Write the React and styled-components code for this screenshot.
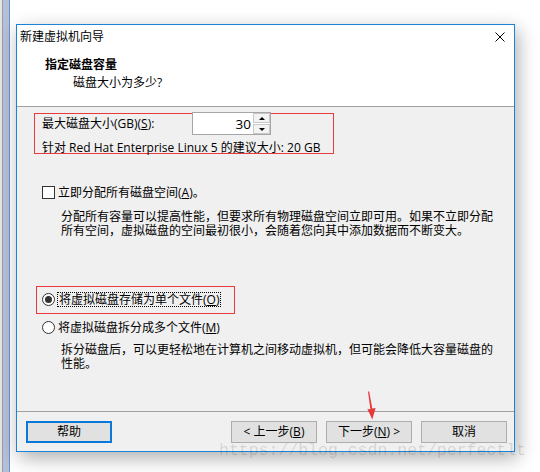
import React from "react";
import styled, { createGlobalStyle } from "styled-components";

const FONT = `"Open Sans", "Noto Sans CJK SC", sans-serif`;

const GlobalStyle = createGlobalStyle`
  html, body { margin: 0; padding: 0; background: #ffffff; }
  body {
    width: 540px;
    height: 472px;
    overflow: hidden;
    font-family: ${FONT};
    font-size: 12px;
    color: #000;
  }
`;

const Page = styled.div`
  position: relative;
  display: flex;
  align-items: flex-start;
  width: 540px;
  height: 472px;
  background: #fff;
  overflow: hidden;
`;

const BackWindowEdge = styled.div`
  flex: 0 0 10px;
  align-self: stretch;
  background: linear-gradient(
    to right,
    #e4e4e4 0px, #e4e4e4 2px,
    #9c9ca4 2px, #9c9ca4 3px,
    #b6bed8 3px, #b6bed8 9px,
    #5b97d6 9px, #5b97d6 10px
  );
`;

const Dialog = styled.div`
  box-sizing: border-box;
  margin: 24px 0 0 6px;
  width: 499px;
  height: 428px;
  border: 1px solid #1883d7;
  background: #f0f0f0;
  display: flex;
  flex-direction: column;
  box-shadow: 3px 6px 18px rgba(0, 0, 0, 0.32);
`;

const TitleBar = styled.div`
  height: 24px;
  display: flex;
  align-items: center;
  background: #fff;
  padding: 0 9px 0 3px;
`;

const TitleText = styled.div`
  flex: 1;
  line-height: 14px;
  font-size: 12px;
`;

const CloseIcon = styled.svg`
  display: block;
  width: 10px;
  height: 10px;
`;

const Header = styled.div`
  box-sizing: border-box;
  height: 58px;
  background: #fff;
  padding-top: 8px;
  border-bottom: 1px solid #a0a0a0;
`;

const HeaderTitle = styled.div`
  padding-left: 28px;
  font-weight: 700;
  font-size: 12px;
  line-height: 16px;
`;

const HeaderSubtitle = styled.div`
  padding-left: 56px;
  margin-top: 3px;
  line-height: 14px;
`;

const Body = styled.div`
  flex: 1;
  display: flex;
  flex-direction: column;
  align-items: flex-start;
`;

const Highlight = styled.div`
  box-sizing: border-box;
  border: 1px solid #e8393c;
  width: ${(p) => p.$width}px;
  height: ${(p) => p.$height}px;
  margin-left: ${(p) => p.$left}px;
  margin-top: ${(p) => p.$top}px;
  display: flex;
  flex-direction: column;
`;

const SizeRow = styled.div`
  display: flex;
  align-items: center;
  height: 23px;
  margin-top: -2px;
  padding-left: 7px;
`;

const SizeLabel = styled.div`
  width: 150px;
  line-height: 14px;
`;

const Spin = styled.div`
  box-sizing: border-box;
  display: flex;
  width: 79px;
  height: 23px;
  border: 1px solid #a6a6a6;
  background: #fff;
`;

const SpinValue = styled.div`
  flex: 1;
  display: flex;
  align-items: center;
  justify-content: flex-end;
  padding-right: 2px;
  font-size: 13.5px;
  line-height: 16px;
`;

const SpinButtons = styled.div`
  width: 17px;
  display: flex;
  flex-direction: column;
  gap: 1px;
`;

const SpinButton = styled.div`
  flex: 1;
  box-sizing: border-box;
  border: 1px solid #c9c9c9;
  background: #f3f3f3;
  display: flex;
  align-items: center;
  justify-content: center;
`;

const Triangle = styled.div`
  width: 0;
  height: 0;
  border-left: 3px solid transparent;
  border-right: 3px solid transparent;
  ${(p) =>
    p.$dir === "up"
      ? "border-bottom: 3px solid #000;"
      : "border-top: 3px solid #000;"}
`;

const HintRow = styled.div`
  margin-top: 6px;
  padding-left: 7px;
  line-height: 14px;
  white-space: nowrap;
`;

const OptionRow = styled.div`
  display: flex;
  align-items: center;
  height: 14px;
  margin-left: ${(p) => p.$left || 0}px;
  margin-top: ${(p) => p.$top || 0}px;
  padding-left: ${(p) => p.$pad || 0}px;
  padding-top: ${(p) => p.$padTop || 0}px;
`;

const CheckBox = styled.div`
  box-sizing: border-box;
  width: 13px;
  height: 13px;
  border: 1px solid #333;
  background: #fff;
  margin-right: 3px;
`;

const Radio = styled.div`
  box-sizing: border-box;
  width: 13px;
  height: 13px;
  border: 1px solid #333;
  border-radius: 50%;
  background: #fff;
  display: flex;
  align-items: center;
  justify-content: center;
  margin-right: ${(p) => (p.$focused ? 2 : 3)}px;
  &::after {
    content: "";
    display: ${(p) => (p.$checked ? "block" : "none")};
    width: 7px;
    height: 7px;
    border-radius: 50%;
    background: #333;
  }
`;

const OptionLabel = styled.span`
  line-height: 13px;
  white-space: nowrap;
  padding: 0 ${(p) => (p.$focused ? 1 : 0)}px;
  border: ${(p) => (p.$focused ? "1px dotted #000" : "none")};
`;

const Description = styled.div`
  margin-left: 44px;
  margin-top: ${(p) => p.$top}px;
  line-height: 13.5px;
  white-space: nowrap;
`;

const Footer = styled.div`
  box-sizing: border-box;
  height: 40px;
  border-top: 1px solid #a0a0a0;
  padding: 9px 7px 0 9px;
  display: flex;
  align-items: flex-start;
  gap: 9px;
`;

const Button = styled.div`
  box-sizing: border-box;
  width: 86px;
  height: 22px;
  display: flex;
  align-items: center;
  justify-content: center;
  background: #e1e1e1;
  border: ${(p) => (p.$default ? "2px solid #0a78d7" : "1px solid #adadad")};
  line-height: 14px;
  white-space: pre;
  ${(p) => (p.$pushRight ? "margin-right: auto;" : "")}
`;

const Watermark = styled.div`
  position: absolute;
  left: 219px;
  top: 441px;
  font-family: "Liberation Mono", monospace;
  font-size: 16.5px;
  line-height: 20px;
  color: rgba(0, 0, 0, 0.13);
  white-space: nowrap;
  pointer-events: none;
`;

const Arrow = styled.svg`
  position: absolute;
  left: 362px;
  top: 390px;
  width: 16px;
  height: 32px;
`;

export default function App() {
  return (
    <>
      <GlobalStyle />
      <Page>
        <BackWindowEdge />
        <Dialog>
          <TitleBar>
            <TitleText>新建虚拟机向导</TitleText>
            <CloseIcon viewBox="0 0 10 10">
              <path d="M0.5 0.5 L9.5 9.5 M9.5 0.5 L0.5 9.5" stroke="#000" strokeWidth="1" fill="none" />
            </CloseIcon>
          </TitleBar>
          <Header>
            <HeaderTitle>指定磁盘容量</HeaderTitle>
            <HeaderSubtitle>磁盘大小为多少?</HeaderSubtitle>
          </Header>
          <Body>
            <Highlight $width={300} $height={41} $left={17} $top={6}>
              <SizeRow>
                <SizeLabel>
                  最大磁盘大小(GB)(<u>S</u>):
                </SizeLabel>
                <Spin>
                  <SpinValue>30</SpinValue>
                  <SpinButtons>
                    <SpinButton>
                      <Triangle $dir="up" />
                    </SpinButton>
                    <SpinButton>
                      <Triangle $dir="down" />
                    </SpinButton>
                  </SpinButtons>
                </Spin>
              </SizeRow>
              <HintRow>针对 Red Hat Enterprise Linux 5 的建议大小: 20 GB</HintRow>
            </Highlight>

            <OptionRow $left={25} $top={31}>
              <CheckBox />
              <OptionLabel>
                立即分配所有磁盘空间(<u>A</u>)。
              </OptionLabel>
            </OptionRow>
            <Description $top={11}>
              分配所有容量可以提高性能，但要求所有物理磁盘空间立即可用。如果不立即分配
              <br />
              所有空间，虚拟磁盘的空间最初很小，会随着您向其中添加数据而不断变大。
            </Description>

            <Highlight $width={199} $height={28} $left={19} $top={49}>
              <OptionRow $pad={5} $padTop={5}>
                <Radio $checked $focused />
                <OptionLabel $focused>
                  将虚拟磁盘存储为单个文件(<u>O</u>)
                </OptionLabel>
              </OptionRow>
            </Highlight>

            <OptionRow $left={25} $top={6}>
              <Radio />
              <OptionLabel>
                将虚拟磁盘拆分成多个文件(<u>M</u>)
              </OptionLabel>
            </OptionRow>
            <Description $top={9}>
              拆分磁盘后，可以更轻松地在计算机之间移动虚拟机，但可能会降低大容量磁盘的
              <br />
              性能。
            </Description>
          </Body>
          <Footer>
            <Button $default $pushRight>帮助</Button>
            <Button>
              {"< 上一步("}<u>B</u>{")"}
            </Button>
            <Button>
              {"下一步("}<u>N</u>{") >"}
            </Button>
            <Button>取消</Button>
          </Footer>
        </Dialog>
        <Arrow viewBox="0 0 16 32">
          <polygon
            points="6,1.5 7.2,1.5 10.3,18.6 13.6,18 10.3,29.5 5.4,19 8.4,19.2"
            fill="#e8363a"
          />
        </Arrow>
        <Watermark>https://blog.csdn.net/perfectlt</Watermark>
      </Page>
    </>
  );
}
